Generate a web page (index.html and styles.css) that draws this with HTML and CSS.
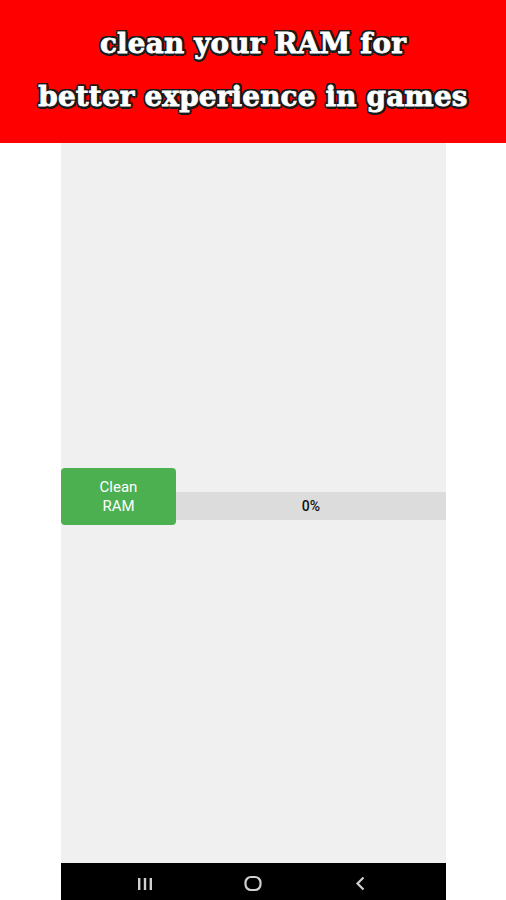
FILE: index.html
```html
<!DOCTYPE html>
<html>
<head>
<meta charset="utf-8">
<link rel="stylesheet" href="styles.css">
</head>
<body>
<header class="banner">
  <div class="headline">clean your RAM for</div>
  <div class="headline">better experience in games</div>
</header>
<main class="stage">
  <section class="phone">
    <div class="screen">
      <div class="row">
        <button class="clean-btn">Clean<br>RAM</button>
        <div class="progress"><span class="pct">0%</span></div>
      </div>
    </div>
    <nav class="navbar">
      <svg class="nav-icon" width="20" height="16" viewBox="0 0 20 16"><rect x="3" y="2" width="2.4" height="12" fill="#d0d0d0"/><rect x="8.8" y="2" width="2.4" height="12" fill="#d0d0d0"/><rect x="14.6" y="2" width="2.4" height="12" fill="#d0d0d0"/></svg>
      <svg class="nav-icon" width="20" height="18" viewBox="0 0 20 18"><rect x="2.5" y="2" width="15" height="13" rx="5.5" fill="none" stroke="#d0d0d0" stroke-width="2.2"/></svg>
      <svg class="nav-icon" width="20" height="18" viewBox="0 0 20 18"><path d="M12.5 2.5 L6.5 8.5 L12.5 14.5" fill="none" stroke="#d0d0d0" stroke-width="2.2"/></svg>
    </nav>
  </section>
</main>
</body>
</html>
```
FILE: styles.css
```css
html, body {
  margin: 0;
  padding: 0;
  background: #ffffff;
  width: 506px;
  height: 900px;
  overflow: hidden;
}
.banner {
  height: 143px;
  background: #ff0000;
  display: flex;
  flex-direction: column;
  align-items: center;
  justify-content: center;
  gap: 13px;
  padding-bottom: 2px;
  box-sizing: border-box;
}
.headline {
  font-family: "DejaVu Serif", serif;
  font-weight: bold;
  font-size: 27.8px;
  line-height: 40px;
  color: #ffffff;
  letter-spacing: 0.2px;
  -webkit-text-stroke: 0.8px #ffffff;
  text-shadow: -2px -2px 0 #1a1a1a, 2px -2px 0 #1a1a1a, -2px 2px 0 #1a1a1a, 2px 2px 0 #1a1a1a, 0 2.5px 0 #1a1a1a, 0 -2.5px 0 #1a1a1a, 2.5px 0 0 #1a1a1a, -2.5px 0 0 #1a1a1a;
}
.stage {
  height: 757px;
  display: flex;
  padding-left: 61px;
}
.phone {
  width: 385px;
  display: flex;
  flex-direction: column;
  background: #f0f0f0;
}
.screen {
  flex: 1;
  display: flex;
  flex-direction: column;
  padding-top: 325px;
}
.row {
  display: flex;
  align-items: flex-end;
}
.clean-btn {
  width: 115px;
  height: 57px;
  background: #4caf50;
  border: none;
  border-radius: 4px;
  color: #ffffff;
  font-family: Roboto, "Liberation Sans", sans-serif;
  font-size: 15px;
  line-height: 19px;
  padding: 0;
  margin: 0;
}
.progress {
  flex: 1;
  height: 28px;
  margin-bottom: 5px;
  background: #dcdcdc;
  display: flex;
  align-items: center;
  justify-content: center;
}
.pct {
  font-family: Roboto, "Liberation Sans", sans-serif;
  font-size: 14px;
  font-weight: 500;
  color: #111111;
}
.navbar {
  height: 37px;
  background: #000000;
  display: flex;
  align-items: center;
  justify-content: space-between;
  padding: 4px 75px 0 74px;
  box-sizing: border-box;
}
.nav-icon {
  display: block;
}
```
